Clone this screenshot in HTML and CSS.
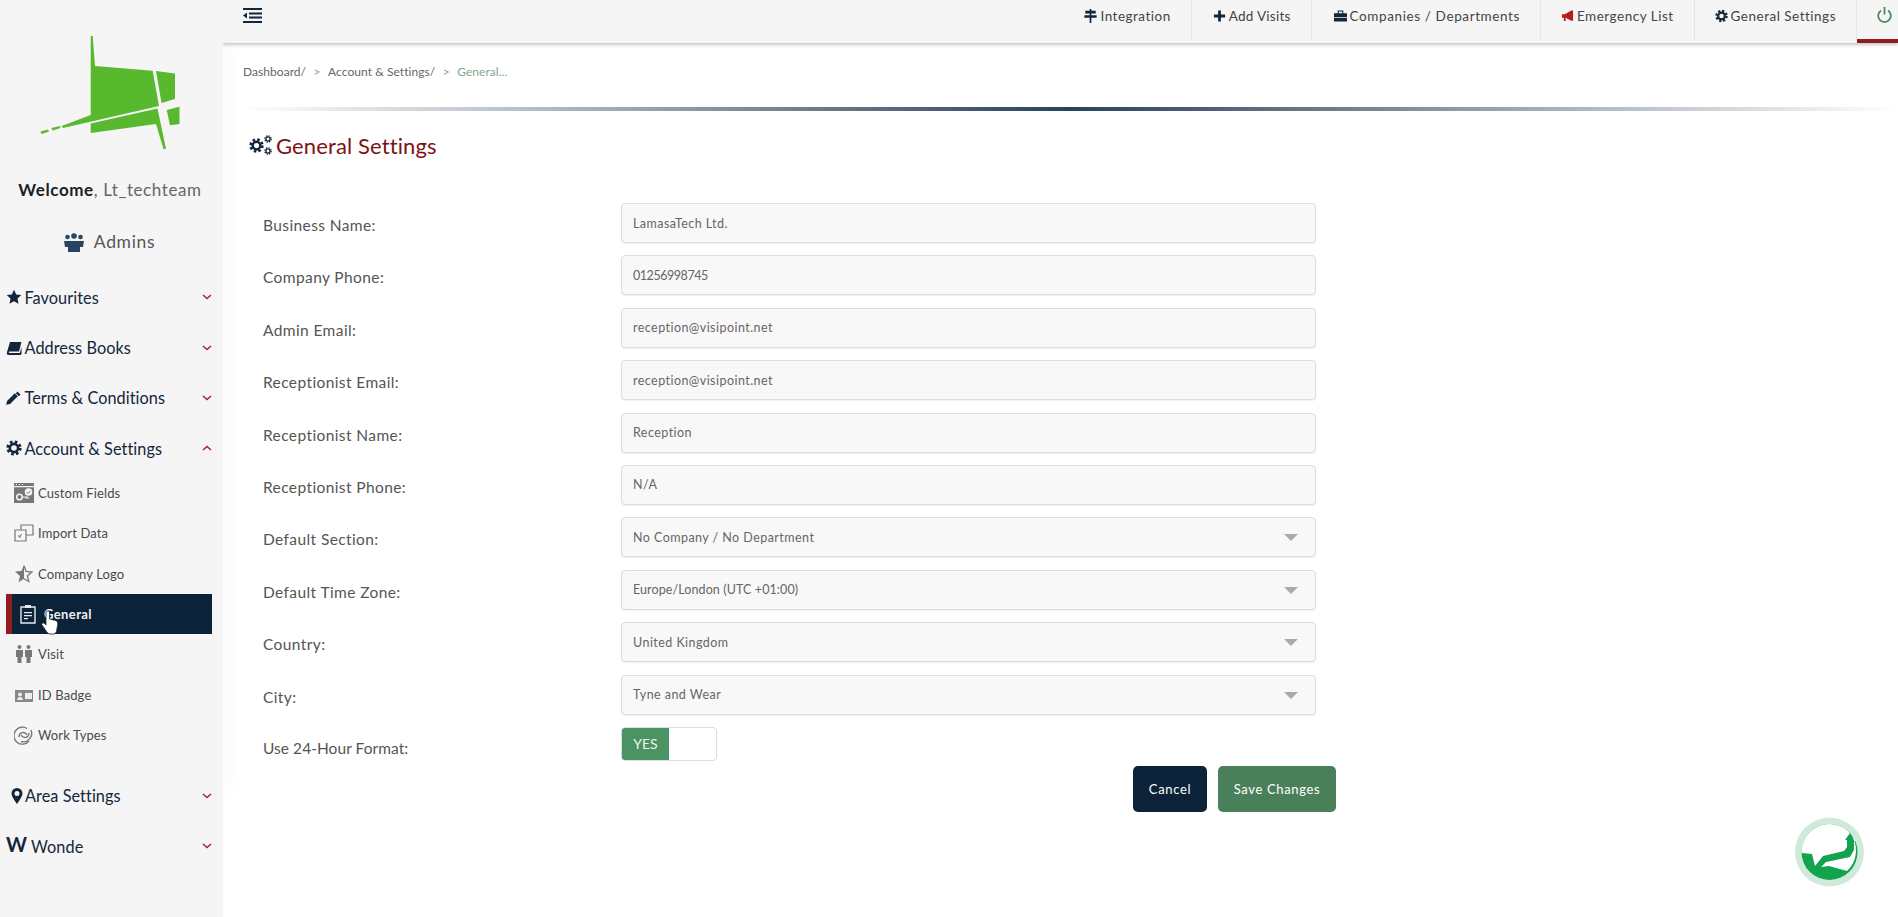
FILE: index.html
```html
<!DOCTYPE html>
<html lang="en">
<head>
<meta charset="utf-8">
<title>General Settings</title>
<link rel="stylesheet" href="styles.css">
</head>
<body>
<svg class="defs" width="0" height="0" aria-hidden="true">
  <symbol id="cog" viewBox="0 0 24 24">
    <circle cx="12" cy="12" r="6.2" fill="none" stroke="currentColor" stroke-width="4"/>
    <circle cx="12" cy="12" r="9.5" fill="none" stroke="currentColor" stroke-width="4" stroke-dasharray="4 3.46"/>
  </symbol>
  <symbol id="chev-d" viewBox="0 0 10 6"><path d="M1 1l4 3.6L9 1" fill="none" stroke="currentColor" stroke-width="1.4"/></symbol>
  <symbol id="chev-u" viewBox="0 0 10 6"><path d="M1 5l4-3.6L9 5" fill="none" stroke="currentColor" stroke-width="1.4"/></symbol>
</svg>

<div class="app">
  <aside class="sidebar">
    <div class="logo">
      <svg width="223" height="122" viewBox="0 30 223 122">
        <g fill="#58b92f">
          <path d="M90.700 36h2L95 66l57.700 4.700L159 106l-96 22-1.300-2 29-11z"/>
          <path d="M90.700 123.500l66.800-15L166 149h-2.500L156 124l-65.300 9z"/>
          <path d="M156 71l19 2.500V99l-13.500 4z"/>
          <path d="M166.700 110l12.800-3.300V124l-9.500 1.300z"/>
          <path d="M51.500 128l8.500-2 .5 2-8 2.500z"/>
          <path d="M40.500 131.500l7.500-2 1 2-7.500 2.500z"/>
        </g>
      </svg>
    </div>
    <p class="welcome"><b>Welcome</b>, Lt_techteam</p>
    <p class="role">
      <svg width="20" height="19" viewBox="0 0 20 19"><g fill="#274560"><circle cx="3.500" cy="4" r="2.300"/><circle cx="16.500" cy="4" r="2.300"/><circle cx="10" cy="3" r="2.800"/><path d="M0 8h5l1 6H1z"/><path d="M15 8h5l-1 6h-5z"/><path d="M5 8h10l1 2v9H4v-9z"/></g></svg>
      <span>Admins</span>
    </p>
    <nav class="menu">
      <a class="item">
        <svg class="ic" viewBox="0 0 16 16"><path fill="currentColor" d="M8 .8l2.200 4.700 5.100.6-3.800 3.500 1 5.100L8 12.200l-4.500 2.500 1-5.100L.7 6.100l5.100-.6z"/></svg>
        <span>Favourites</span><svg class="chev"><use href="#chev-d"/></svg>
      </a>
      <a class="item">
        <svg class="ic" viewBox="0 0 16 16"><path fill="currentColor" d="M4 2h11.500l-2.500 9.500H3.500c-1 0-1 1.500 0 1.500h10.300l1.700-6V14l-1 1H2.500C1 15 .5 13.500 1 12z"/></svg>
        <span>Address Books</span><svg class="chev"><use href="#chev-d"/></svg>
      </a>
      <a class="item">
        <svg class="ic" viewBox="0 0 16 16"><path fill="currentColor" d="M11.500 1.500l3 3-1.700 1.700-3-3zM8.800 3.200l3 3-7.800 7.800-3.800.8.800-3.800z"/></svg>
        <span>Terms &amp; Conditions</span><svg class="chev"><use href="#chev-d"/></svg>
      </a>
      <a class="item">
        <svg class="ic"><use href="#cog"/></svg>
        <span>Account &amp; Settings</span><svg class="chev"><use href="#chev-u"/></svg>
      </a>
      <div class="sub">
        <a class="subitem">
          <svg class="sic" viewBox="0 0 20 20"><path fill="#777" d="M0 0h20v20H0z"/><path fill="#f5f5f5" d="M0 3h20v1.200H0zM2 1h1v1H2zM5 1h1v1H5zM8 1h1v1H8z"/><circle cx="5.500" cy="14" r="2.800" fill="none" stroke="#f5f5f5" stroke-width="1.500"/><path fill="none" stroke="#f5f5f5" d="M9 14h5v2M12 14v2"/><circle cx="14.500" cy="9" r="3.800" fill="#f5f5f5"/><path d="M12.500 9l1.500 1.500L16.500 8" fill="none" stroke="#777"/></svg>
          <span>Custom Fields</span>
        </a>
        <a class="subitem">
          <svg class="sic" viewBox="0 0 20 20"><path fill="none" stroke="#777" stroke-width="1.200" d="M1 7h11v11H1zM7 7V2h12v10h-7"/><path fill="none" stroke="#777" d="M5 14l3-3M5 12v2h2"/></svg>
          <span>Import Data</span>
        </a>
        <a class="subitem">
          <svg class="sic" viewBox="0 0 20 20"><path fill="#777" d="M10 1v13.800l-5.500 3.500L6 11.900 1 7.600l6.500-.6z"/><path fill="none" stroke="#777" stroke-width="1.300" d="M10 1.800l2.100 5.700 5.800.5-4.500 3.900 1.400 5.600L10 14.800"/></svg>
          <span>Company Logo</span>
        </a>
        <a class="subitem active">
          <svg class="sic" viewBox="0 0 20 20"><path fill="none" stroke="#e4e8ec" stroke-width="1.400" d="M3 3h14v16H3z"/><path fill="#e4e8ec" d="M7 1h6v3H7zM6 8h8v1.200H6zM6 11h8v1.200H6zM6 14h4v1.200H6z"/></svg>
          <span>General</span>
        </a>
        <a class="subitem">
          <svg class="sic" viewBox="0 0 20 20"><g fill="#777"><circle cx="5.500" cy="3" r="2"/><circle cx="14.500" cy="3" r="2"/><path d="M2 6h7v7H7.500v6h-4v-6H2z"/><path d="M11 6h7v7h-1.500v6h-4v-6H11z"/></g></svg>
          <span>Visit</span>
        </a>
        <a class="subitem">
          <svg class="sic" viewBox="0 0 20 20"><path fill="#888" d="M1 5h18v12H1z"/><circle cx="6" cy="9.500" r="2" fill="#eee"/><path fill="#eee" d="M3 15c0-4 6-4 6 0zM11 8h7v6h-7z"/></svg>
          <span>ID Badge</span>
        </a>
        <a class="subitem">
          <svg class="sic" viewBox="0 0 20 20"><g fill="none" stroke="#777" stroke-width="1.400"><path d="M13 3.500A8.500 8.500 0 1 0 15 16"/><path d="M7 16.500A8.500 8.500 0 0 0 17 5"/><path d="M5 12c0-5 6-6 8-2M15 8c0 5-6 6-8 2"/></g></svg>
          <span>Work Types</span>
        </a>
      </div>
      <a class="item area">
        <svg class="ic pin" viewBox="0 0 16 16"><path fill="currentColor" fill-rule="evenodd" d="M8 0a5.500 5.500 0 0 1 5.500 5.500C13.500 9 8 16 8 16S2.500 9 2.500 5.500A5.500 5.500 0 0 1 8 0zm0 3a2.500 2.500 0 1 0 0 5 2.500 2.500 0 0 0 0-5z"/></svg>
        <span>Area Settings</span><svg class="chev"><use href="#chev-d"/></svg>
      </a>
      <a class="item wonde">
        <b class="w">W</b>
        <span>Wonde</span><svg class="chev"><use href="#chev-d"/></svg>
      </a>
    </nav>
    <svg class="cursor" width="20" height="25" viewBox="0 0 20 25"><path fill="#fff" stroke="#222" stroke-width=".8" d="M5 2c1-1.500 3-1.500 3.500 0v7l6 1.500c2 .6 2.500 2 2.200 4l-1 6c-.3 2-1.500 3.500-3.500 3.500H9c-1.500 0-2.500-1-3.500-2.500L1 15c-.8-1.500 1-3 2.500-1.500L5 15z"/></svg>
  </aside>

  <div class="main">
    <header class="topbar">
      <svg class="collapse" width="19" height="15" viewBox="0 0 19 15"><path fill="#14263a" d="M0 0h19v2H0zM6 4.500h13v2H6zM6 8.500h13v2H6zM0 13h19v2H0zM4 4.500v6L0 7.500z"/></svg>
      <nav class="topnav">
        <a class="tab">
          <svg class="tic" viewBox="0 0 14 16"><path fill="#14263a" d="M6 0h2v2h5v3H8v2h6v3H8v6H6v-6H0V7h6V5H1V2h5z"/></svg>
          <span>Integration</span>
        </a>
        <a class="tab tab-tight">
          <svg class="tic" viewBox="0 0 14 14"><path fill="#14263a" d="M5.500 1h3v4.500H13v3H8.500V13h-3V8.500H1v-3h4.500z"/></svg>
          <span>Add Visits</span>
        </a>
        <a class="tab tab-wide">
          <svg class="tic" viewBox="0 0 14 14"><path fill="#14263a" d="M4 1h6v3h4v4H0V4h4zm1.200 1.200V4h3.600V2.200zM0 9h14v4H0z"/></svg>
          <span>Companies / Departments</span>
        </a>
        <a class="tab">
          <svg class="tic" viewBox="0 0 14 14"><path fill="#b3211d" d="M11 1h2v11h-2L5 9v3.500H3V9H1V5h3z"/></svg>
          <span>Emergency List</span>
        </a>
        <a class="tab">
          <svg class="tic cogt"><use href="#cog"/></svg>
          <span>General Settings</span>
        </a>
        <a class="power">
          <svg width="15" height="16" viewBox="0 0 15 16"><path fill="none" stroke="#4c8c5e" stroke-width="1.800" d="M7.500 0v7.500M4 3.500a6.300 6.300 0 1 0 7 0"/></svg>
        </a>
      </nav>
    </header>

    <div class="crumbs">
      <span>Dashboard/</span><i>&gt;</i><span>Account &amp; Settings/</span><i>&gt;</i><span class="here">General...</span>
    </div>
    <div class="rule"></div>

    <h1 class="title">
      <svg width="23" height="20" viewBox="0 0 23 20"><use href="#cog" width="15" height="15" y="3" color="#14263a"/><use href="#cog" width="8" height="8" x="15" y="0" color="#14263a"/><use href="#cog" width="8" height="8" x="15" y="12" color="#14263a"/></svg>
      <span>General Settings</span>
    </h1>

    <form class="form">
      <label class="row"><span class="lbl">Business Name:</span><input class="field" value="LamasaTech Ltd."></label>
      <label class="row"><span class="lbl">Company Phone:</span><input class="field digits" value="01256998745"></label>
      <label class="row"><span class="lbl">Admin Email:</span><input class="field" value="reception@visipoint.net"></label>
      <label class="row"><span class="lbl">Receptionist Email:</span><input class="field" value="reception@visipoint.net"></label>
      <label class="row"><span class="lbl">Receptionist Name:</span><input class="field" value="Reception"></label>
      <label class="row"><span class="lbl">Receptionist Phone:</span><input class="field" value="N/A"></label>
      <label class="row"><span class="lbl">Default Section:</span><span class="pick"><select class="field"><option>No Company / No Department</option></select></span></label>
      <label class="row"><span class="lbl">Default Time Zone:</span><span class="pick"><select class="field digits2"><option>Europe/London (UTC +01:00)</option></select></span></label>
      <label class="row"><span class="lbl">Country:</span><span class="pick"><select class="field"><option>United Kingdom</option></select></span></label>
      <label class="row"><span class="lbl">City:</span><span class="pick"><select class="field"><option>Tyne and Wear</option></select></span></label>
      <div class="row toggle-row"><span class="lbl">Use 24-Hour Format:</span><span class="toggle"><b>YES</b><i></i></span></div>
      <div class="actions">
        <button type="button" class="btn cancel">Cancel</button>
        <button type="button" class="btn save">Save Changes</button>
      </div>
    </form>
  </div>
</div>

<div class="chat">
  <svg width="80" height="80" viewBox="0 0 80 80">
    <circle cx="39.500" cy="40" r="34.500" fill="#cfeadb"/>
    <circle cx="39.500" cy="40" r="28" fill="#12a34f"/>
    <path fill="#fff" d="M11.500 41A28 28 0 0 1 60 21l-5 7h2v7l-3 4-21 5-8 10-3-12z"/>
    <path fill="#fff" d="M60 21l6 8h-2v9l-4 7-24 5-5 5 8-1 18 5A28 28 0 0 0 60 21z"/>
  </svg>
</div>
</body>
</html>
```
FILE: styles.css
```css
* { box-sizing: border-box; }
html, body { margin: 0; height: 917px; overflow: hidden; background: #fff; }
body { font-family: Lato, "Open Sans", Arial, sans-serif; color: #444; }
.defs { position: absolute; }
p, h1 { margin: 0; }

.app { display: flex; height: 917px; }

.sidebar {
  position: relative;
  width: 223px;
  flex: none;
  background: #f5f5f5;
  padding-top: 30px;
}
.sidebar::after {
  content: "";
  position: absolute;
  top: 40px;
  right: 0;
  width: 6px;
  height: 750px;
  box-shadow: 6px 0 16px rgba(0, 0, 0, .06);
  background: #f5f5f5;
}
.logo { height: 122px; }
.logo svg { display: block; }
.welcome {
  margin: 27px 3px 0 0;
  text-align: center;
  font-size: 17px;
  line-height: 22px;
  letter-spacing: .6px;
  color: #666;
  white-space: nowrap;
}
.welcome b { color: #1b1f25; font-weight: 700; }
.role {
  margin: 30px 4px 0 0;
  display: flex;
  justify-content: center;
  align-items: center;
  gap: 10px;
  font-size: 17.500px;
  line-height: 22px;
  letter-spacing: .65px;
  color: #555;
}
.menu { margin-top: 19px; position: relative; z-index: 1; }
.item {
  display: flex;
  align-items: center;
  height: 50.400px;
  padding-left: 6px;
  padding-right: 11px;
  color: #14263a;
  font-size: 16.300px;
  letter-spacing: .05px;
  white-space: nowrap;
}
.ic { width: 16px; height: 16px; margin-right: 2.500px; flex: none; }
.pin { margin-left: 3px; margin-right: 0; }
.item .chev { margin-left: auto; width: 10px; height: 6px; color: #a3222a; flex: none; }
.sub { margin-top: -1px; padding-bottom: 15.500px; }
.subitem {
  display: flex;
  align-items: center;
  height: 40.400px;
  padding-left: 14px;
  font-size: 13px;
  letter-spacing: .12px;
  color: #4a4a4a;
}
.sic { width: 20px; height: 20px; margin-right: 4px; flex: none; }
.subitem.active {
  width: 206px;
  margin-left: 6px;
  padding-left: 6px;
  background: #0c2238;
  border-left: 6px solid #8f1d20;
  color: #eef1f4;
  font-weight: 700;
  letter-spacing: .4px;
}
.subitem.active .sic { margin-right: 6px; }
.wonde .w { font-size: 20px; margin-right: 4px; color: #14263a; position: relative; top: -2px; }
.cursor { position: absolute; left: 41px; top: 610px; z-index: 2; }

.main { flex: 1; min-width: 0; }
.topbar {
  display: flex;
  align-items: flex-start;
  justify-content: space-between;
  height: 43px;
  background: #f5f5f5;
  padding-left: 20px;
  box-shadow: 0 2px 3px rgba(0, 0, 0, .22);
}
.collapse { margin-top: 8px; }
.topnav { display: flex; height: 43px; }
.tab {
  display: flex;
  align-items: center;
  height: 40px;
  padding: 0 20px 8px;
  border-right: 1px solid #e6e6e6;
  color: #444;
  font-size: 13.500px;
  letter-spacing: .5px;
  white-space: nowrap;
}
.tab-tight { letter-spacing: .26px; padding-left: 21px; }
.tab-wide { letter-spacing: .61px; padding-left: 22px; }
.tic { width: 13px; height: 14px; margin-right: 3px; flex: none; }
.cogt { color: #14263a; }
.power {
  display: block;
  width: 41px;
  padding: 7px 0 0 20px;
  height: 43px;
  border-bottom: 4px solid #8f1d20;
}
.power svg { display: block; }

.crumbs {
  display: flex;
  align-items: center;
  gap: 7.500px;
  height: 20px;
  margin: 18px 0 0 20px;
  font-size: 12px;
  letter-spacing: .05px;
  color: #666;
}
.crumbs i { font-style: normal; color: #999; }
.crumbs .here { color: #7fa98c; }
.rule {
  height: 4px;
  margin: 26px 0 0 17px;
  background: linear-gradient(90deg, rgba(20, 45, 70, 0) 0%, rgba(20, 45, 70, .9) 50%, rgba(20, 45, 70, 0) 100%);
}
.title {
  display: flex;
  align-items: center;
  gap: 4px;
  height: 28px;
  margin: 20px 0 0 26px;
  font-size: 22px;
  font-weight: 400;
  letter-spacing: .12px;
  color: #7c1313;
}

.form { width: 1073px; margin: 44px 0 0 40px; }
.row { display: flex; align-items: center; margin-bottom: 12.400px; height: 40px; }
.lbl {
  width: 358px;
  flex: none;
  padding-top: 4px;
  font-size: 15.500px;
  letter-spacing: .4px;
  color: #555;
  font-weight: 400;
}
.field {
  display: block;
  width: 695px;
  height: 40px;
  padding: 0 11px;
  border: 1px solid #ddd;
  border-radius: 4px;
  background: #f8f8f8;
  font: 12.500px Lato, Arial, sans-serif;
  letter-spacing: .45px;
  color: #666;
  appearance: none;
  box-shadow: 0 1px 1px rgba(0, 0, 0, .06);
}
.field.digits { letter-spacing: -.45px; }
.field.digits2 { letter-spacing: .1px; }
.pick { position: relative; display: block; }
.pick::after {
  content: "";
  position: absolute;
  right: 18px;
  top: 17px;
  border-style: solid;
  border-width: 7px 7px 0;
  border-color: #aaa transparent transparent;
}
.toggle-row { margin-bottom: 0; height: 34px; margin-top: 12px; }
.toggle {
  display: flex;
  width: 96px;
  height: 34px;
  border: 1px solid #ddd;
  border-radius: 4px;
  overflow: hidden;
  background: #fff;
}
.toggle b {
  width: 47px;
  background: #4b9362;
  color: #e9f8ec;
  font-size: 14px;
  font-weight: 400;
  line-height: 32px;
  text-align: center;
}
.toggle-row .lbl { padding-top: 9px; letter-spacing: .05px; }
.actions { display: flex; justify-content: flex-end; gap: 11px; margin-top: 5px; }
.btn {
  height: 46px;
  border: 0;
  border-radius: 5px;
  color: #fff;
  font: 13px Lato, Arial, sans-serif;
  letter-spacing: .65px;
}
.cancel { width: 74px; background: #0c2238; }
.save { width: 118px; background: #4a8059; }

.chat { position: absolute; left: 1790px; top: 812px; line-height: 0; }
```
